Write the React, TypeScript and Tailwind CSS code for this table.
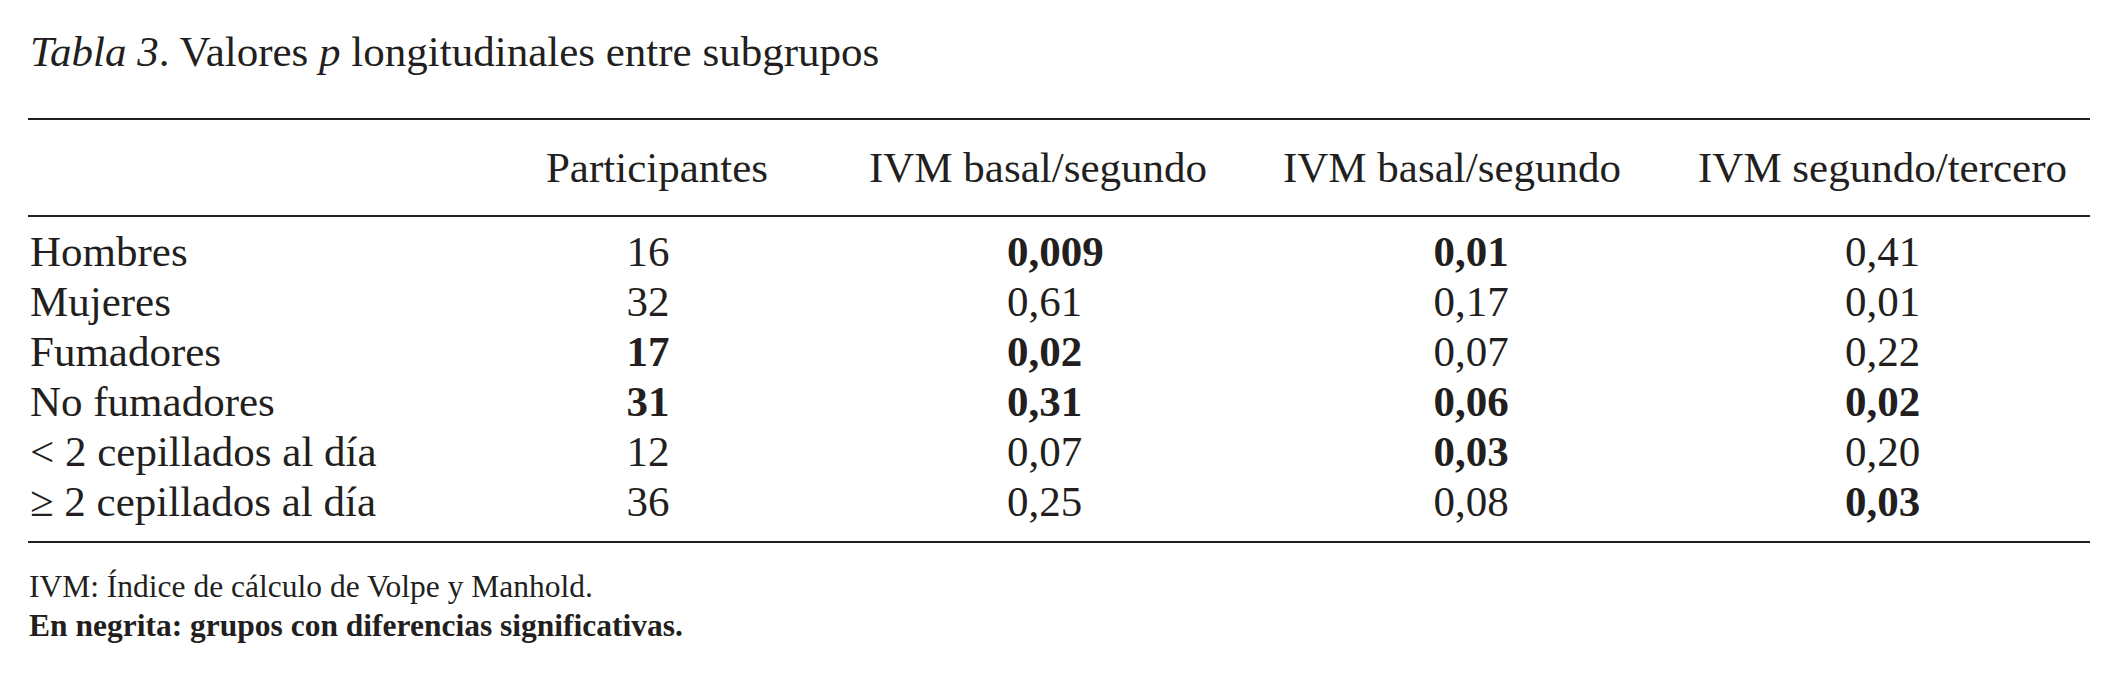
const rows = [
  { label: "Hombres", n: "16", a: "0,009", b: "0,01", c: "0,41", bold: [false, true, true, false] },
  { label: "Mujeres", n: "32", a: "0,61", b: "0,17", c: "0,01", bold: [false, false, false, false] },
  { label: "Fumadores", n: "17", a: "0,02", b: "0,07", c: "0,22", bold: [true, true, false, false] },
  { label: "No fumadores", n: "31", a: "0,31", b: "0,06", c: "0,02", bold: [true, true, true, true] },
  { label: "< 2 cepillados al día", n: "12", a: "0,07", b: "0,03", c: "0,20", bold: [false, false, true, false] },
  { label: "≥ 2 cepillados al día", n: "36", a: "0,25", b: "0,08", c: "0,03", bold: [false, false, false, true] },
];

const cols = "grid grid-cols-[439px_380px_382px_446px_1fr]";

export default function App() {
  return (
    <div className="w-[2116px] h-[691px] bg-white text-[#231f20] font-[family-name:'Liberation_Serif','Times_New_Roman',serif] px-[28px] pt-[28px] overflow-hidden">
      {/* Caption */}
      <p className="text-[43px] leading-[48px] pl-[2px] whitespace-nowrap">
        <i>Tabla 3</i>. Valores <i>p</i> longitudinales entre subgrupos
      </p>

      {/* Table */}
      <div className="w-[2062px] mt-[42px] border-t-2 border-b-2 border-[#231f20] text-[43px] leading-[50px]">
        <div className={`${cols} items-center h-[97px] border-b-2 border-[#231f20]`}>
          <div />
          <div className="justify-self-center whitespace-nowrap">Participantes</div>
          <div className="justify-self-center whitespace-nowrap">IVM basal/segundo</div>
          <div className="justify-self-center whitespace-nowrap">IVM basal/segundo</div>
          <div className="justify-self-center whitespace-nowrap">IVM segundo/tercero</div>
        </div>
        <div className="pt-[10px] pb-[14px]">
          {rows.map((r) => (
            <div key={r.label} className={`${cols} h-[50px] items-center`}>
              <div className="whitespace-nowrap pl-[2px]">{r.label}</div>
              <div className={`justify-self-center pr-[18px] ${r.bold[0] ? "font-bold" : ""}`}>{r.n}</div>
              <div className={`justify-self-start pl-[160px] ${r.bold[1] ? "font-bold" : ""}`}>{r.a}</div>
              <div className={`justify-self-center pl-[38px] ${r.bold[2] ? "font-bold" : ""}`}>{r.b}</div>
              <div className={`justify-self-center ${r.bold[3] ? "font-bold" : ""}`}>{r.c}</div>
            </div>
          ))}
        </div>
      </div>

      {/* Notes */}
      <div className="mt-[24px] text-[31.5px] leading-[39px] pl-[1px]">
        <p className="whitespace-nowrap">IVM: Índice de cálculo de Volpe y Manhold.</p>
        <p className="whitespace-nowrap font-bold">En negrita: grupos con diferencias significativas.</p>
      </div>
    </div>
  );
}
